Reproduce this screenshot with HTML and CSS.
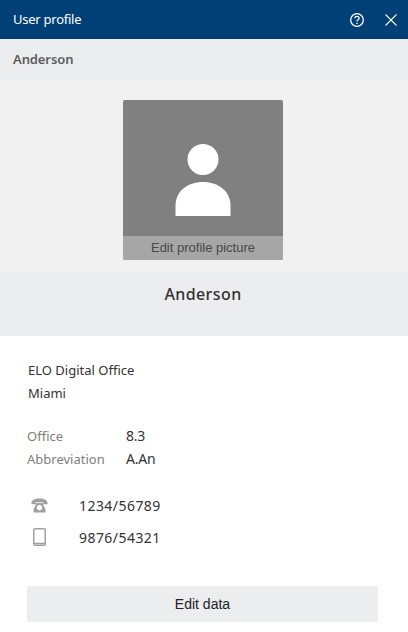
FILE: index.html
```html
<!DOCTYPE html>
<html lang="en">
<head>
    <meta charset="UTF-8">
    <meta name="viewport" content="width=device-width, initial-scale=1.0">
    <title>User profile</title>
    <link rel="stylesheet" href="styles.css">
</head>
<body>
    <div class="panel">
        <div class="titlebar">
            <span class="title">User profile</span>
            <div class="title-icons">
                <svg width="16" height="16" viewBox="0 0 16 16" fill="none" stroke="#fff">
                    <circle cx="8" cy="8" r="6.300" stroke-width="1.300"/>
                    <path d="M5.900 6.300c0-1.200 1-2 2.100-2s2.100.8 2.100 1.900c0 1.600-2.100 1.600-2.100 3.200" stroke-width="1.300"/>
                    <path d="M7.300 10.700h1.400v1.400H7.300z" fill="#fff" stroke="none"/>
                </svg>
                <svg width="14" height="14" viewBox="0 0 14 14" fill="none" stroke="#fff" stroke-width="1.100">
                    <path d="M1.500 1.500l11 11M12.500 1.500l-11 11"/>
                </svg>
            </div>
        </div>
        <div class="subtitle">Anderson</div>
        <div class="picture-area">
            <div class="picture">
                <div class="avatar">
                    <svg width="56" height="72" viewBox="0 0 56 72" fill="#fff">
                        <circle cx="28" cy="15.500" r="15.500"/>
                        <path d="M0.500 72V62C0.500 47 12.500 38 28 38s27.500 9 27.500 24v10z"/>
                    </svg>
                </div>
                <div class="picture-edit">Edit profile picture</div>
            </div>
        </div>
        <div class="name-band">Anderson</div>
        <div class="details">
            <div class="company">
                <div>ELO Digital Office</div>
                <div>Miami</div>
            </div>
            <div class="facts">
                <div class="fact"><span class="fact-label">Office</span><span class="fact-value">8.3</span></div>
                <div class="fact"><span class="fact-label">Abbreviation</span><span class="fact-value">A.An</span></div>
            </div>
            <div class="phones">
                <div class="phone">
                    <span class="phone-icon">
                        <svg width="17" height="15" viewBox="0 0 17 15" fill="#a0a0a0">
                            <path d="M0.500 5C0.500 2 4 0.500 8.500 0.500S16.500 2 16.500 5v1.300h-4.300V4.200H4.800v2.100H0.500z"/>
                            <path fill-rule="evenodd" d="M5.500 5h6l3 6.500V14.500H2.500V11.500zM8.500 7a2.700 2.700 0 1 0 0 5.400 2.700 2.700 0 0 0 0-5.400z"/>
                        </svg>
                    </span>
                    <span class="phone-number">1234/56789</span>
                </div>
                <div class="phone">
                    <span class="phone-icon phone-icon-mobile">
                        <svg width="13" height="18" viewBox="0 0 13 18" fill="none">
                            <rect x="0.750" y="0.750" width="11.500" height="16.500" rx="1.500" stroke="#a0a0a0" stroke-width="1.500"/>
                            <path d="M1 15.500h11" stroke="#a0a0a0" stroke-width="1.500"/>
                        </svg>
                    </span>
                    <span class="phone-number">9876/54321</span>
                </div>
            </div>
            <button class="edit-btn">Edit data</button>
        </div>
    </div>
</body>
</html>
```

FILE: styles.css
```css
body {
    margin: 0;
    background-color: #fff;
    font-family: 'Noto Sans', sans-serif;
    font-size: 13px;
    color: #333;
}

.panel {
    width: 408px;
    height: 632px;
    overflow: hidden;
}

.titlebar {
    height: 39px;
    background-color: #004077;
    color: #fff;
    display: flex;
    align-items: center;
    justify-content: space-between;
    padding: 0 10px 0 13px;
}

.title {
    font-size: 13px;
    letter-spacing: -0.25px;
    margin-top: -1px;
}

.title-icons {
    display: flex;
    align-items: center;
    gap: 19px;
}

.title-icons svg {
    display: block;
}

.subtitle {
    height: 40px;
    line-height: 40px;
    padding-left: 13px;
    background-color: #ecedef;
    color: #5c5c5c;
    font-weight: 600;
    letter-spacing: -0.1px;
}

.picture-area {
    height: 192px;
    background-color: #f1f1f1;
    display: flex;
    justify-content: center;
    padding: 21px 2px 0 0;
    box-sizing: border-box;
}

.picture {
    width: 160px;
    height: 160px;
    background-color: #808080;
    border-radius: 2px;
    overflow: hidden;
    display: flex;
    flex-direction: column;
}

.avatar {
    height: 136px;
    display: flex;
    justify-content: center;
    padding-top: 44px;
    box-sizing: border-box;
}

.picture-edit {
    height: 24px;
    line-height: 24px;
    background-color: #a6a6a6;
    color: #484848;
    text-align: center;
    font-family: 'Liberation Sans', sans-serif;
    font-size: 13px;
}

.name-band {
    height: 65px;
    line-height: 46px;
    padding-right: 2px;
    background-color: #ecedef;
    color: #333;
    text-align: center;
    font-size: 16px;
    font-weight: 500;
    letter-spacing: 0.4px;
}

.details {
    padding: 23px 30px 0 27px;
}

.company {
    padding-left: 1px;
    line-height: 23px;
}

.facts {
    margin-top: 19px;
}

.fact {
    display: flex;
    align-items: baseline;
    height: 23px;
    line-height: 23px;
}

.fact-label {
    width: 99px;
    color: #808080;
}

.fact-value {
    font-size: 14px;
    letter-spacing: -0.2px;
}

.phones {
    margin-top: 19px;
}

.phone {
    display: flex;
    align-items: center;
    height: 32px;
}

.phone-number {
    font-size: 14px;
    letter-spacing: 0.45px;
}

.phone-icon {
    width: 52px;
    padding-left: 4px;
    box-sizing: border-box;
    display: flex;
}

.phone-icon-mobile {
    padding-left: 6px;
}

.edit-btn {
    display: block;
    width: 100%;
    height: 36px;
    margin-top: 33px;
    border: none;
    border-radius: 2px;
    background-color: #ecedef;
    color: #222;
    font-family: 'Liberation Sans', sans-serif;
    font-size: 14px;
}
```
